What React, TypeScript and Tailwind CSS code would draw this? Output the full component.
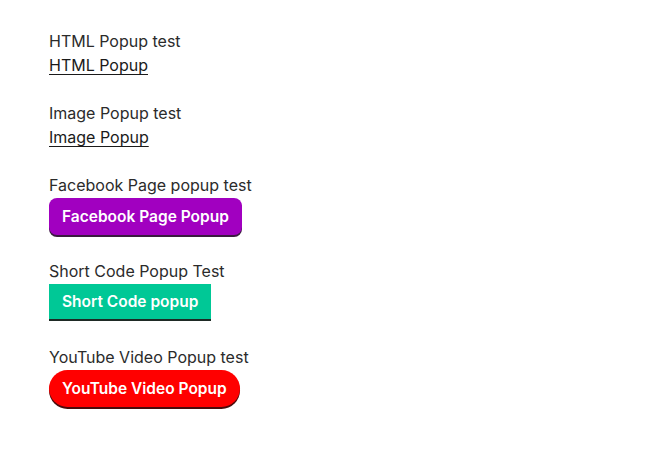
const items = [
  { label: 'HTML Popup test', link: 'HTML Popup', kind: 'link' },
  { label: 'Image Popup test', link: 'Image Popup', kind: 'link' },
  { label: 'Facebook Page popup test', link: 'Facebook Page Popup', kind: 'fb' },
  { label: 'Short Code Popup Test', link: 'Short Code popup', kind: 'sc' },
  { label: 'YouTube Video Popup test', link: 'YouTube Video Popup', kind: 'yt' },
];

export default function App() {
  return (
    <div
      className="min-h-[451px] bg-white pl-[49px] pt-[29px] text-[16px] leading-6 text-[#2b2b2b]"
      style={{ fontFamily: 'Inter, "Noto Sans", sans-serif' }}
    >
      {items.map((it) => (
        <div key={it.label} className="mb-6">
          <p>{it.label}</p>
          {it.kind === 'link' && (
            <a className="underline decoration-1 underline-offset-[3px] text-[#1a1a1a]">{it.link}</a>
          )}
          {it.kind === 'fb' && (
            <button className="mt-[1px] h-[37px] rounded-lg bg-[#a100c0] px-[13px] text-[15.5px] font-semibold text-white shadow-[0_2px_0_#3a1a40]">
              {it.link}
            </button>
          )}
          {it.kind === 'sc' && (
            <button className="mt-[1px] h-[37px] border-b-2 border-[#1e2a25] bg-[#00c896] px-[13px] text-[15.5px] font-semibold text-white">
              {it.link}
            </button>
          )}
          {it.kind === 'yt' && (
            <button className="mt-[1px] h-[37px] rounded-full bg-[#ff0000] px-[13px] text-[15.5px] font-semibold text-white shadow-[0_2px_0_#4a0a0a]">
              {it.link}
            </button>
          )}
        </div>
      ))}
    </div>
  );
}
